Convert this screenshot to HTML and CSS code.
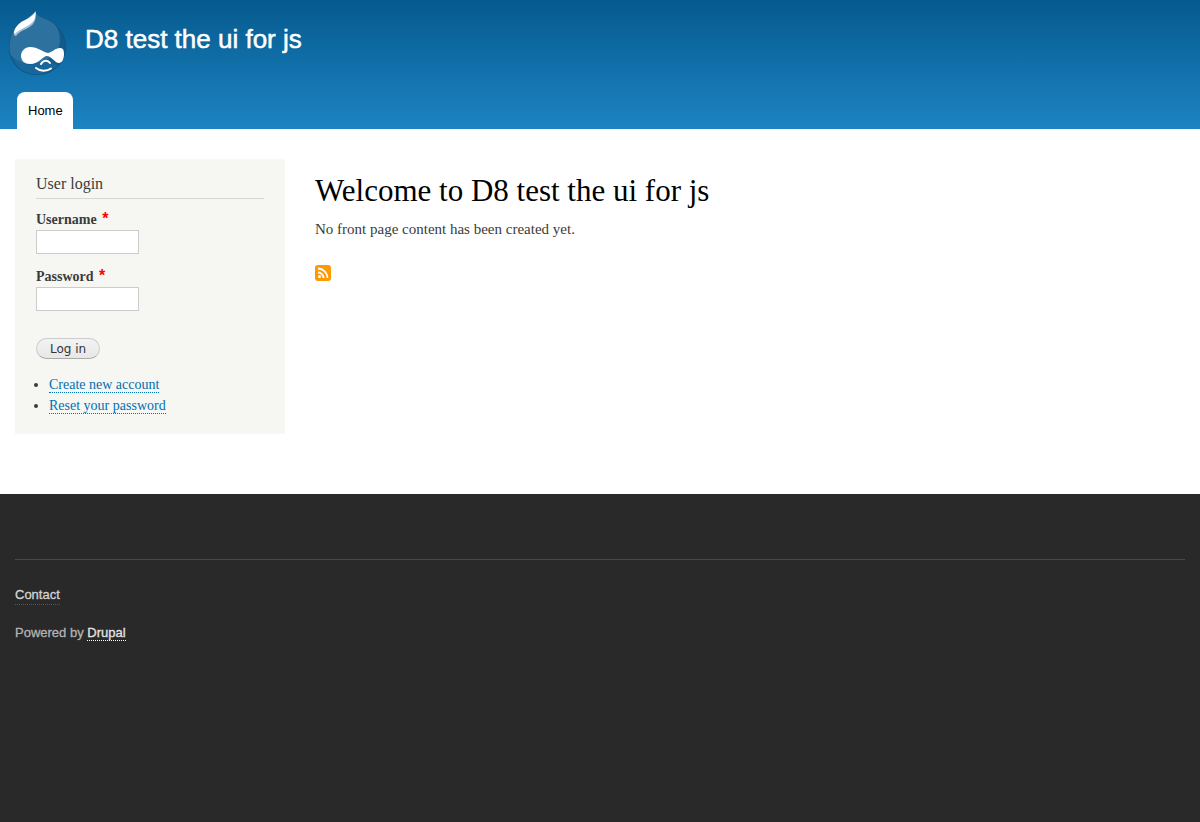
FILE: index.html
```html
<!DOCTYPE html>
<html lang="en">
<head>
<meta charset="utf-8">
<title>Welcome to D8 test the ui for js</title>
<link rel="stylesheet" href="styles.css">
</head>
<body>
<header class="header">
  <div class="branding">
    <a class="logo" href="#" aria-label="Home">
      <svg width="60" height="66" viewBox="0 0 60 66" aria-hidden="true">
        <defs>
          <clipPath id="drop"><path d="M26.500 1C28 6 33 7 40 10C51 16 57 26 57 37C57 53 44 65 28 65C12 65 0 53 0 37C0 28 3 21 8 15C14 9 24 8 26.500 1Z"/></clipPath>
        </defs>
        <g clip-path="url(#drop)">
          <path fill="#135a8a" d="M0 0H60V66H0Z"/>
          <path fill="#2d719f" d="M0 0H30C43 10 51 17 51 30C51 44 37 54 20 54C11 54 4 49 0 43Z"/>
          <path fill="#18669c" d="M3 46C12 56 25 57 36 50L50 56L30 65C16 65 6 57 3 46Z"/>
          <path fill="none" stroke="#0b5482" d="M26.500 1C28 6 33 7 40 10C51 16 57 26 57 37C57 53 44 65 28 65C12 65 0 53 0 37C0 28 3 21 8 15C14 9 24 8 26.500 1Z"/>
        </g>
        <path fill="#a3bfd3" d="M26.500 2C28 11 24 16 17 19C12 21 9 23 7 26C4 26 4 22 7 18Z"/>
        <path fill="#fff" d="M26.500 1C27 8 25 12 20 15C14 19 9 20 6 24C4 22 6 17 11 13C16 9 24 8 26.500 1Z"/>
        <path fill="#fff" d="M21 37C29 37 34 42 39 43C44 42 46 38 51 38C54 38 55 40 55 44C55 49 53 53 50 53C46 53 42 46 38 46C34 46 30 54 21 54C16 54 12 51 12 46C12 41 16 37 21 37Z"/>
        <path fill="none" stroke="#fff" stroke-width="2" stroke-linecap="round" d="M32 54C34 50 39 50 41 53"/>
        <path fill="none" stroke="#fff" stroke-width="2" stroke-linecap="round" d="M27 58C31 61.500 38 61.500 42 58.500"/>
      </svg>
    </a>
    <a class="site-name" href="#">D8 test the ui for js</a>
  </div>
  <nav class="menu"><a class="tab" href="#">Home</a></nav>
</header>
<div class="layout">
  <aside class="sidebar">
    <h2 class="block-title">User login</h2>
    <form>
      <div class="field">
        <label class="label" for="name">Username <span class="required">*</span></label>
        <input class="input" id="name" type="text">
      </div>
      <div class="field">
        <label class="label" for="pass">Password <span class="required">*</span></label>
        <input class="input" id="pass" type="password">
      </div>
      <button class="button" type="submit">Log in</button>
    </form>
    <ul class="links">
      <li><a class="link" href="#">Create new account</a></li>
      <li><a class="link" href="#">Reset your password</a></li>
    </ul>
  </aside>
  <main class="content">
    <h1 class="page-title">Welcome to D8 test the ui for js</h1>
    <p class="message">No front page content has been created yet.</p>
    <a class="feed" href="#" aria-label="Subscribe">
      <svg width="16" height="16" viewBox="0 0 16 16" aria-hidden="true">
        <rect width="16" height="16" rx="3" fill="#ff9900"/>
        <circle cx="4.500" cy="11.500" r="1.500" fill="#fff"/>
        <path d="M3 7.500A5.500 5.500 0 0 1 8.500 13M3 3.500A9.500 9.500 0 0 1 12.500 13" fill="none" stroke="#fff" stroke-width="1.800"/>
      </svg>
    </a>
  </main>
</div>
<footer class="footer">
  <div class="footer-inner">
    <a class="contact" href="#">Contact</a>
    <p class="powered">Powered by <a class="drupal" href="#">Drupal</a></p>
  </div>
</footer>
</body>
</html>
```
FILE: styles.css
```css
* { box-sizing: border-box; }
body {
  margin: 0;
  min-height: 100vh;
  display: flex;
  flex-direction: column;
  background: #fff;
  color: #3b3b3b;
  font-family: Georgia, "Liberation Serif", serif;
}
a { text-decoration: none; }
h1, h2, p, ul { margin: 0; }
.header {
  padding: 10px 9px 0;
  background: linear-gradient(#055a8e, #1d84c3);
  font-family: "Liberation Sans", sans-serif;
}
.branding { display: flex; gap: 16px; }
.logo { height: 66px; }
.logo svg, .feed svg { display: block; }
.site-name {
  padding-top: 14px;
  color: #fff;
  font-size: 26px;
  line-height: 30px;
  -webkit-text-stroke: 0.5px #fff;
}
.menu { display: flex; padding: 16px 8px 0; }
.tab {
  padding: 0 10px 0 11px;
  border-radius: 8px 8px 0 0;
  background: #fff;
  color: #000;
  font-size: 13px;
  line-height: 37px;
}
.layout {
  display: grid;
  grid-template-columns: 270px 1fr;
  gap: 30px;
  padding: 30px 15px 60px;
  align-items: start;
}
.sidebar {
  padding: 15px 21px 17px;
  border: 1px solid #f9f9f9;
  border-width: 1px 0;
  background: #f6f6f2;
}
.block-title {
  padding-bottom: 5px;
  margin-bottom: 11px;
  border-bottom: 1px solid #d6d6d6;
  font-size: 16px;
  font-weight: 400;
  line-height: 18px;
}
.field { margin-bottom: 13px; }
.label {
  display: block;
  height: 20px;
  font-size: 14px;
  font-weight: 700;
  line-height: 18px;
}
.required {
  margin-left: 2px;
  color: #f00;
  font-family: "Liberation Sans", sans-serif;
  font-size: 16px;
  line-height: 18px;
}
.input {
  display: block;
  width: 103px;
  height: 24px;
  padding: 2px;
  border: 1px solid #ccc;
  background: #fff;
}
.button {
  display: block;
  margin-top: 27px;
  height: 21px;
  padding: 0 13px;
  border: 1px solid #ccc;
  border-bottom-color: #aaa;
  border-radius: 11px;
  background: linear-gradient(#f3f3f3, #e7e7e7);
  color: #333;
  font: 12px/18px "DejaVu Sans", sans-serif;
}
.links {
  margin-top: 15px;
  padding-left: 13px;
  font-size: 14px;
  line-height: 21px;
}
.link { border-bottom: 1px dotted #0071b3; color: #0071b3; line-height: 14px; }
.content { padding-top: 14px; }
.page-title {
  color: #000;
  font-size: 31px;
  font-weight: 400;
  line-height: 36px;
}
.message { margin: 10px 0 25px; font-size: 15px; line-height: 21px; }
.feed { display: inline-block; }
.footer {
  flex: 1;
  padding: 65px 15px 30px;
  background: #292929;
  color: #b3b3b3;
  font: 13px/18px "Liberation Sans", sans-serif;
  -webkit-text-stroke: 0.3px currentColor;
}
.footer-inner { padding-top: 26px; border-top: 1px solid #4a4a4a; }
.contact {
  display: inline-block;
  border-bottom: 1px dotted #555;
  color: #d4d4d4;
}
.powered { margin-top: 19px; }
.drupal { border-bottom: 1px dotted #fff; color: #e4e4e4; }
```
